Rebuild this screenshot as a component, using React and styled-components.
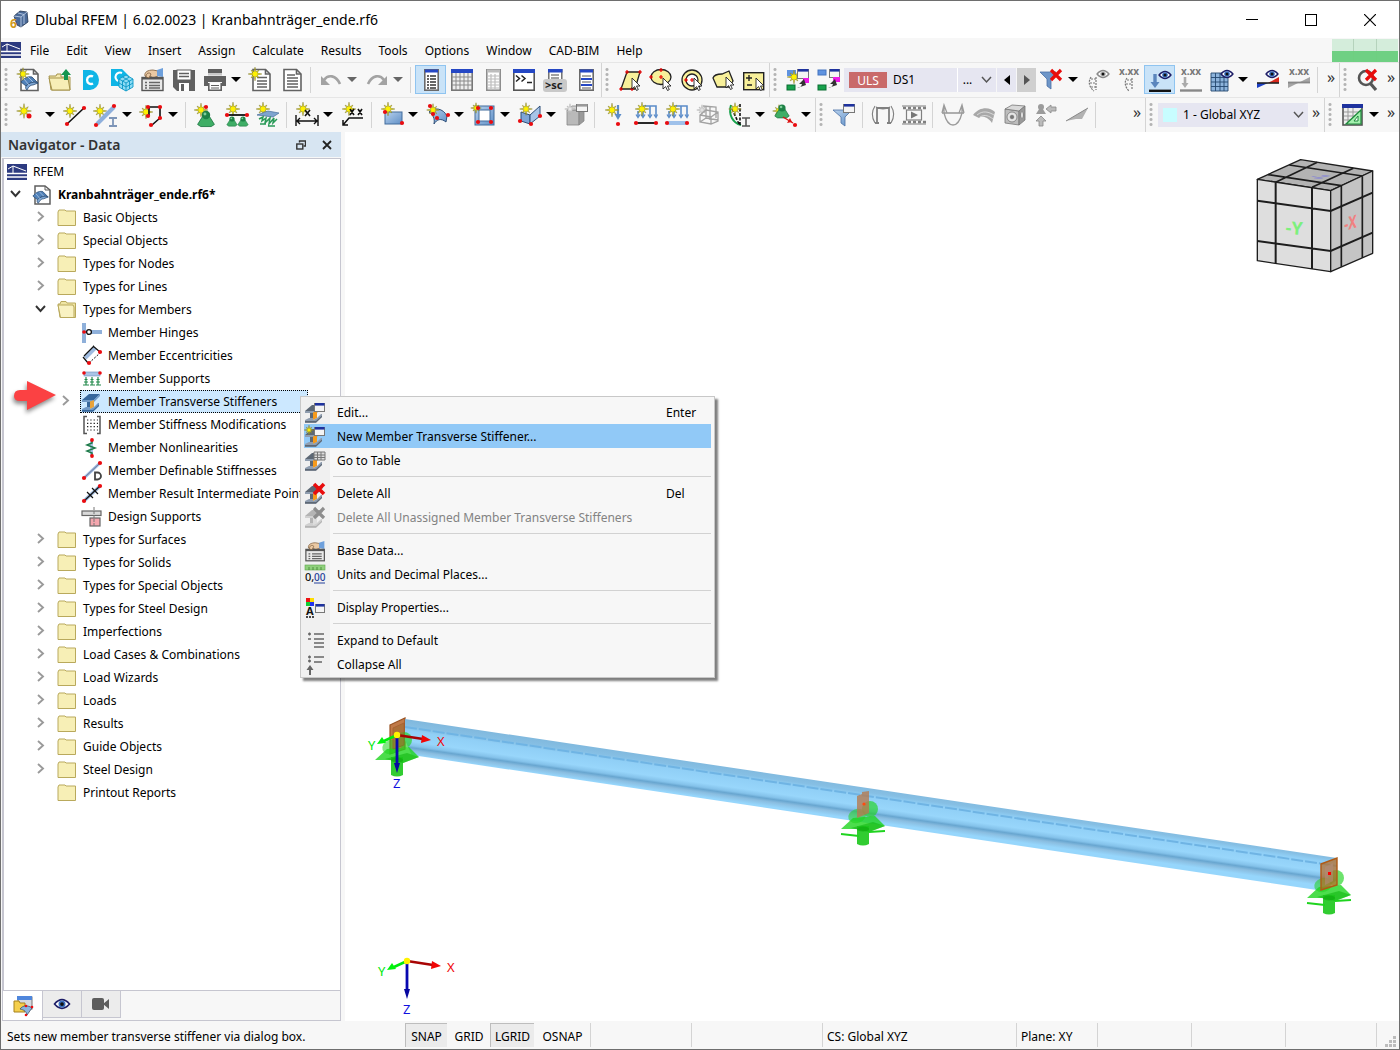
import React from "react";
import styled, { createGlobalStyle, css } from "styled-components";

const UI_FONT = '"Noto Sans", "Open Sans", sans-serif';

const GlobalStyle = createGlobalStyle`
  *, *::before, *::after { box-sizing: border-box; }
  body { margin: 0; background: #fff; }
  button, select { font: inherit; color: inherit; }
`;

/* ---------- drawing helpers ---------- */

function starPoints(cx, cy, r) {
  const pts = [];
  for (let i = 0; i < 16; i += 1) {
    const a = (Math.PI * i) / 8;
    const k = i % 2 ? r * 0.36 : i % 4 === 0 ? r * 1.05 : r * 0.85;
    pts.push(`${(cx + k * Math.sin(a)).toFixed(2)},${(cy - k * Math.cos(a)).toFixed(2)}`);
  }
  return pts.join(" ");
}

const Star = ({ x = 7, y = 7, r = 7, fill = "#fff200", stroke = "#7a7430" }) => (
  <polygon points={starPoints(x, y, r)} fill={fill} stroke={stroke} strokeWidth="0.5" />
);
const Dot = ({ x, y, r = 2.1 }) => <circle cx={x} cy={y} r={r} fill="#ea0c10" />;
const Eye = ({ x = 16, y = 5, c = "#1d1d66", iris = "#3a6fc0" }) => (
  <g transform={`translate(${x} ${y})`}>
    <path d="M-6 0Q0-7 6 0Q0 7-6 0Z" fill="#fff" stroke={c} strokeWidth="1.3" />
    <circle r="2.8" fill={iris} />
    <circle r="1.5" fill="#111" />
  </g>
);
const Cursor = ({ x, y }) => (
  <path transform={`translate(${x} ${y})`} d="M0 0V11L2.6 8.6L4.5 12.5L6.3 11.6L4.5 8H8Z" fill="#fff" stroke="#222" strokeWidth="0.9" />
);
const Cross = ({ x, y, s = 5, c = "#e80c0c", w = 3.2 }) => (
  <path d={`M${x - s} ${y - s}L${x + s} ${y + s}M${x + s} ${y - s}L${x - s} ${y + s}`} stroke={c} strokeWidth={w} fill="none" />
);
const MiniWindow = ({ x, y, w = 10, h = 8, c = "#1e329e" }) => (
  <g>
    <rect x={x + 0.5} y={y + 0.5} width={w} height={h} fill="#f4f4f4" stroke="#777" />
    <rect x={x + 1} y={y} width={w - 0.5} height="2.6" fill={c} />
  </g>
);
const Support = ({ x, y, k = 1 }) => (
  <g transform={`translate(${x} ${y}) scale(${k})`}>
    <path d="M-3 1H3L8 9L5 11H-5L-8 9Z" fill="#3fae66" stroke="#1c7440" strokeWidth="0.8" />
    <circle r="4" fill="#1d8146" />
    <circle cx="-1" cy="-1" r="1.4" fill="#7fcf9a" />
  </g>
);
const LoadArrows = ({ c = "#5b8cc9" }) => (
  <g stroke={c} fill="none" strokeWidth="1.6">
    <path d="M9 3H22V14M16 3V14M9 3V14M4 8V14" />
    <path d="M2 11.5L4 14.5L6 11.5M7 11.5L9 14.5L11 11.5M14 11.5L16 14.5L18 11.5M20 11.5L22 14.5L23.5 11.5" strokeWidth="1.3" />
  </g>
);
const Txt = ({ x, y, s = 7, c = "#222", children, w = 700 }) => (
  <text x={x} y={y} fontFamily={UI_FONT} fontSize={s} fontWeight={w} fill={c}>{children}</text>
);
const Beam3d = ({ web = "#f59a1c", a = "#5d6875", b = "#8f9daf" }) => (
  <g>
    <path d="M0 8L7 2H18L12 8Z" fill={a} />
    <path d="M0 8H12V10H0Z" fill={b} />
    <path d="M5 10H8V16H5Z" fill={a} />
    <path d="M8 9.5L12 8V15L8 17Z" fill={web} />
    <path d="M12 8L18 2V4L12 10Z" fill={b} />
    <path d="M0 17L4 15H8V17L12 15L16 11H17V14L11 19.5H0Z" fill={b} />
    <path d="M0 18H11L17 12.5V14L11 19.8H0Z" fill={a} />
  </g>
);
const Panel = ({ children, c = "#2547c4" }) => (
  <g>
    <rect x="5.8" y="1.8" width="13.4" height="20.4" fill="#fff" stroke="#6a6a6a" strokeWidth="1.6" />
    <rect x="6" y="1.5" width="13" height="3" fill={c} />
    {children}
  </g>
);
const Shell = () => (
  <g>
    <path d="M1 9C4 5 8 3 12 4L18 10C14 8 9 10 6 13Z" fill="#4f80b8" stroke="#29496f" strokeWidth="0.8" />
    <path d="M6 13C5 15 6 16 7 17C9 13 11 12 13 12L18 10C14 8 9 10 6 13Z" fill="#7fa8d6" stroke="#29496f" strokeWidth="0.8" />
    <path d="M4 6L9 12M8 4L13 9" stroke="#dce9f6" strokeWidth="0.6" />
  </g>
);
const Hand = () => (
  <g>
    <path d="M4 8C3 4 7 2 12 2L17 3V8L12 10L9 8L7 10Z" fill="#eac9a4" stroke="#7a5b3a" strokeWidth="0.8" />
    <path d="M16 2L22 0V9L16 8Z" fill="#6ea0dc" />
    <rect x="1" y="9.5" width="21" height="13" fill="#e9e9e9" stroke="#555" strokeWidth="1.4" />
    <path d="M1 10.5H22" stroke="#555" strokeWidth="2" />
    <path d="M4 14.5H6M4 17.5H6M4 20H6M8 14.5H19M8 17.5H19M8 20H19" stroke="#666" strokeWidth="1.4" />
    <path d="M5 9C5 5 8 4 10 6L8 10Z" fill="#eac9a4" stroke="#7a5b3a" strokeWidth="0.8" />
  </g>
);
const Page = ({ children }) => (
  <g fill="none" stroke="#626262" strokeWidth="1.6">
    <path d="M4 1.5H16.5L21 6V22.5H4Z" fill="#fff" />
    <path d="M16.5 1.5V6H21" />
    {children}
  </g>
);
const Cube3 = ({ a = "#b9b9b9", b = "#9a9a9a", c = "#d4d4d4" }) => (
  <g stroke="#858585" strokeWidth="0.8">
    <path d="M3 7H15V22H3Z" fill={a} />
    <path d="M3 7L8 3H20L15 7Z" fill={c} />
    <path d="M15 7L20 3V18L15 22Z" fill={b} />
  </g>
);

const ICONS = {
  /* file toolbar */
  newModel: <><Page /><g transform="translate(3 5)"><Shell /></g><Star x={6} y={6} r={6} /></>,
  open: <><path d="M1 8H8L9 6H13V9H22V22H3Z" fill="#f5eab0" stroke="#a5934a" /><path d="M1 10H20L22 22H4Z" fill="#f7eeb6" stroke="#a5934a" /><path d="M18 1L23 7H20V12H16V7H13Z" fill="#159650" /></>,
  dCenter: <><path d="M4 2H11A9 10 0 0 1 11 22H4Z" fill="#0fb5e6" /><path d="M14 8.5A4 4 0 1 0 14 15.5" fill="none" stroke="#fff" strokeWidth="2.4" /></>,
  cloudCubes: <><path d="M1 1H12L19 8V18H1Z" fill="#0fb5e6" /><path d="M12 5A4 4 0 1 0 8 13" fill="none" stroke="#fff" strokeWidth="2" /><g fill="#8fdcf4" stroke="#0a97c6" strokeWidth="0.9"><path d="M16 7L23 11V19L16 23L9 19V11Z" /><path d="M9 11L16 15L23 11M16 15V23M12.5 9L19.5 13V21M19.5 9L12.5 13V21M9 15L16 19L23 15" fill="none" /></g></>,
  baseData: <Hand />,
  save: <><path d="M1 2H23V23H5L1 19Z" fill="#606060" /><rect x="5" y="2" width="14" height="10" fill="#fff" stroke="#606060" /><path d="M7 5.5H17M7 8.5H17" stroke="#606060" strokeWidth="1.4" /><rect x="7" y="15" width="10" height="8" fill="#fff" /><rect x="9" y="16" width="3" height="7" fill="#606060" /></>,
  print: <><rect x="5" y="1" width="14" height="4" fill="#606060" /><path d="M1 8H23V18H19V14H5V18H1Z" fill="#606060" /><path d="M5.8 15V22.2H18.2V15" fill="#fff" stroke="#606060" strokeWidth="1.6" /><path d="M8 17.5H16M8 20H16" stroke="#606060" /><rect x="5" y="5" width="14" height="2.5" fill="#c8c8c8" /></>,
  newReport: <><Page><path d="M8 9.5H18M8 13H18M8 16H18M8 19H18" strokeWidth="1.4" /></Page><Star x={6} y={6} r={6.5} /></>,
  report: <Page><path d="M7 7H15M7 10H18M7 13H18M7 16H18M7 19H18" strokeWidth="1.4" /></Page>,
  undo: <><path d="M5 12C9 6 17 7 21 16" fill="none" stroke="#a3a3a3" strokeWidth="2.6" /><path d="M2 8V17H11Z" fill="#a3a3a3" /></>,
  redo: <><path d="M19 12C15 6 7 7 3 16" fill="none" stroke="#a3a3a3" strokeWidth="2.6" /><path d="M22 8V17H13Z" fill="#a3a3a3" /></>,
  navPanel: <Panel><path d="M8 8H10M8 11H10M8 14H10M8 17H10M8 20H10M11 8H17M11 11H17M11 14H17M11 17H17M11 20H17" stroke="#333" strokeWidth="1.3" /></Panel>,
  table: <><rect x="1.8" y="1.8" width="20.4" height="20.4" fill="#eee" stroke="#777" strokeWidth="1.6" /><rect x="1" y="1" width="22" height="4" fill="#2547c4" /><path d="M2 9H22M2 13H22M2 17H22M6 5V22M10 5V22M14 5V22M18 5V22" stroke="#8a8a8a" /></>,
  panelOff: <g opacity="0.75"><Panel c="#aaa"><path d="M7 8H18M7 11H18M7 14H18M7 17H18M7 20H18M10 6V22M14 6V22" stroke="#aaa" strokeWidth="1.2" /></Panel></g>,
  console: <><rect x="1.8" y="1.8" width="20.4" height="20.4" fill="#fff" stroke="#555" strokeWidth="1.6" /><rect x="1" y="1" width="22" height="4" fill="#2547c4" /><path d="M4 7.5L7.5 10.5L4 13.5M9.5 7.5L13 10.5L9.5 13.5M15 14.5H20" fill="none" stroke="#222" strokeWidth="1.5" /></>,
  script: <><rect x="5.8" y="1.8" width="13" height="14" fill="#fff" stroke="#666" strokeWidth="1.4" /><rect x="5" y="1" width="14.5" height="3.5" fill="#2547c4" /><path d="M8 7H16M8 10H16" stroke="#444" /><rect x="0" y="11" width="24" height="13" rx="3" fill="#c9c9c9" /><Txt x={2} y={21} s={11}>&gt;sc</Txt></>,
  panelLines: <Panel><path d="M8 8H17M8 14H17M8 20H17" stroke="#555" /><path d="M7 11H18M7 17H18" stroke="#2547c4" strokeWidth="1.8" /></Panel>,
  /* selection toolbar */
  selRect: <><path d="M3 21L9 4H22L17 21Z" fill="#f8f09a" stroke="#222" strokeWidth="1.3" /><g stroke="#e00" strokeWidth="1.2"><path d="M1 21H5M3 19V23M7 4H11M9 2V6M20 4H24M22 2V6M12 21H16M14 19V23" /></g><Cursor x={14} y={10} /></>,
  selEllipse: <><ellipse cx="12" cy="9" rx="10" ry="7.5" fill="#f8f09a" stroke="#222" strokeWidth="1.3" /><g stroke="#e00" strokeWidth="1.2"><path d="M0 9H4M2 7V11M10 9H14M12 7V11M10 2H14M12 0V4" /></g><Cursor x={14} y={10} /></>,
  selRing: <><circle cx="12" cy="12" r="10" fill="#f8f09a" stroke="#222" strokeWidth="1.3" /><circle cx="12" cy="12" r="6" fill="#fff" stroke="#222" strokeWidth="1.3" /><path d="M4 12H8M6 10V14M10 12H14M12 10V14" stroke="#e00" strokeWidth="1.2" /><Cursor x={14} y={10} /></>,
  selPoly: <><path d="M2 10C3 7 6 6 11 6L18 3L22 13L18 19H6Z" fill="#f8f09a" stroke="#222" strokeWidth="1.3" /><Cursor x={15} y={9} /></>,
  selPlusMinus: <><rect x="1.7" y="4.7" width="20" height="17" fill="#f8f09a" stroke="#222" strokeWidth="1.4" /><path d="M4 10H10M7 7V13M5 17H10" stroke="#222" strokeWidth="1.4" /><Cursor x={14} y={10} /></>,
  /* load case toolbar */
  newCase: <><rect x="1" y="2" width="9" height="6" fill="#5f93e0" /><Star x={8} y={9} r={6.5} /><MiniWindow x={11} y={1} w={11} h={9} /><rect x="17" y="10" width="6" height="5" fill="#f018e8" /><rect x="1" y="17" width="8" height="5" fill="#17a24c" stroke="#0b6e32" /><path d="M11 20Q15 20 16 16L13 16L18 11L20 17Z" fill="#333" /></>,
  caseMap: <><rect x="1" y="2" width="8" height="5" fill="#5f93e0" stroke="#4474c0" /><MiniWindow x={12} y={1} w={10} h={8} /><rect x="16" y="9" width="7" height="5" fill="#f018e8" /><rect x="1" y="17" width="8" height="5" fill="#17a24c" stroke="#0b6e32" /><path d="M11 20Q15 20 16 16L13 16L18 11L20 17Z" fill="#333" /></>,
  filterX: <><path d="M0 4H16L11 11V21L7 18V11Z" fill="#6e96c8" stroke="#4a70a4" strokeWidth="0.8" /><Cross x={16} y={7} s={5} /></>,
  eyeMember: <><Eye x={17} y={6} c="#8a8a8a" iris="#bbb" /><path d="M5 9C2 14 3 19 8 23M10 9V22M5 11H10M4 15H10M5 19H10" fill="none" stroke="#777" strokeWidth="1.2" strokeDasharray="2 1" /></>,
  xxMember: <><Txt x={2} y={7} s={10} c="#777">x.xx</Txt><path d="M10 10C7 14 8 19 12 23M15 10V22M10 12H15M9 16H15" fill="none" stroke="#777" strokeWidth="1.2" strokeDasharray="2 1" /></>,
  eyeLoad: <><path d="M7 6V16" stroke="#5b86bd" strokeWidth="3.4" /><path d="M2.5 14H11.5L7 20Z" fill="#5b86bd" /><path d="M1 22.8H23" stroke="#111" strokeWidth="2.4" /><Eye x={17} y={7} /></>,
  xxLoad: <><Txt x={2} y={7} s={10} c="#777">x.xx</Txt><path d="M6 9V17" stroke="#aaa" strokeWidth="2.6" /><path d="M2.5 15H9.5L6 20Z" fill="#aaa" /><path d="M1 22.5H23" stroke="#888" strokeWidth="2.4" /></>,
  eyeMesh: <><path d="M1 5H18V23H1Z" fill="#8db4dc" /><path d="M1 5H18V23H1ZM5.5 5V23M10 5V23M14 5V23M1 9.5H18M1 14H18M1 18.5H18" fill="none" stroke="#24476e" strokeWidth="0.9" /><Eye x={17} y={6} /></>,
  eyeResult: <><path d="M1 15H12L1 20Z" fill="#1b3fc4" /><path d="M12 15H23V9Z" fill="#d8281c" /><path d="M1 15H23" stroke="#222" strokeWidth="1.6" /><Eye x={16} y={6} /></>,
  xxResult: <><Txt x={2} y={7} s={10} c="#777">x.xx</Txt><path d="M1 14.5H12L1 20ZM12 14.5H23V9Z" fill="#a5a5a5" /><path d="M1 14.5H23" stroke="#888" strokeWidth="1.8" /></>,
  zoomX: <><circle cx="10" cy="10" r="7" fill="none" stroke="#555" strokeWidth="2.6" /><path d="M14 15L20 22" stroke="#555" strokeWidth="3.2" /><Cross x={15} y={7} s={5} /></>,
  /* model toolbar */
  newNode: <><Star x={7} y={8} r={7} /><Dot x={12} y={13} r={2.5} /></>,
  newLine: <><Star x={7} y={8} r={6.5} /><path d="M4 21L21 5" stroke="#111" strokeWidth="1.6" /><Dot x={4} y={21} /><Dot x={21} y={5} /></>,
  newMember: <><Star x={6} y={8} r={6.5} /><path d="M3 21L20 4" stroke="#8fb0dc" strokeWidth="4" /><Dot x={2} y={22} /><Dot x={20} y={3} /><path d="M15 15H23M15 23H23M19 15V23" stroke="#7d95b8" strokeWidth="1.8" /></>,
  newPolyline: <><Star x={6} y={9} r={6.5} /><path d="M9 4H20V15L12 22M9 4V12" fill="none" stroke="#111" strokeWidth="1.6" /><Dot x={8} y={4} /><Dot x={20} y={4} /><Dot x={20} y={15} /><Dot x={8} y={13} /><Dot x={11} y={22} /></>,
  newNodalSupport: <><Star x={7} y={7} r={6.5} /><Dot x={12} y={4} /><Support x={12} y={12} k={1.05} /></>,
  newLineSupport: <><Star x={8} y={6} r={6.5} /><path d="M2 12H22" stroke="#111" strokeWidth="1.8" /><Dot x={2} y={12} /><Dot x={22} y={12} /><Support x={7} y={16} k={0.65} /><Support x={18} y={16} k={0.65} /></>,
  newSurfaceSupport: <><Star x={7} y={6} r={6.5} /><path d="M1 12L12 8L23 10L17 14Z" fill="#7fa5cf" stroke="#456d9b" strokeWidth="0.7" /><path d="M3 16L7 14L6 18L10 15L9 20L14 15L13 21L18 15L17 20L21 16M4 21H10M12 23H19" fill="none" stroke="#2a9a58" strokeWidth="1.5" /></>,
  dimension: <><Star x={8} y={6} r={6.5} /><path d="M1 12V23M23 12V23M2 18H22M5 15L2 18L5 21M19 15L22 18L19 21" fill="none" stroke="#111" strokeWidth="1.4" /><path d="M10 7L15 13M15 7L10 13" stroke="#111" strokeWidth="1.6" /></>,
  dimensionXX: <><Star x={8} y={6} r={6.5} /><path d="M2 22L8 15H22M2 17V22H7" fill="none" stroke="#111" strokeWidth="1.5" /><path d="M9 6L13 12M13 6L9 12M17 6L21 12M21 6L17 12" stroke="#111" strokeWidth="1.6" /></>,
  newSurface: <><rect x="5" y="9" width="17" height="12" fill="url(#steel)" stroke="#426c9c" /><Star x={8} y={6} r={6.5} /><Dot x={5} y={9} /><Dot x={22} y={20} /></>,
  newSurfaceCurved: <><path d="M3 9C8 4 17 5 21 13L20 19C15 15 11 16 8 21C9 15 7 12 3 9Z" fill="url(#steel)" stroke="#2f4f78" /><Star x={7} y={7} r={6} /><Dot x={4} y={3} /><Dot x={7} y={11} /><Dot x={11} y={15} /><Dot x={22} y={12} /></>,
  newOpening: <><rect x="3" y="3" width="19" height="19" fill="url(#steel)" stroke="#426c9c" /><rect x="7" y="7" width="11" height="11" fill="#fff" stroke="#426c9c" /><Star x={4} y={5} r={5} /><Dot x={6} y={5} /><Dot x={19} y={5} /><Dot x={6} y={19} /><Dot x={19} y={19} /></>,
  newSolid: <><path d="M3 9L12 12V21L3 18Z" fill="#7fa5d8" stroke="#2f4f78" /><path d="M12 12L22 3V13L12 21Z" fill="#a7c4e8" stroke="#2f4f78" /><Star x={8} y={6} r={6} /><Dot x={2} y={18} /><Dot x={13} y={21} /><Dot x={22} y={13} /></>,
  newBlockOff: <><Cube3 /><MiniWindow x={12} y={1} w={11} h={7} c="#999" /><Star x={6} y={6} r={5} fill="#e6e6e6" stroke="#aaa" /></>,
  nodeLoad: <><path d="M15 2V13" stroke="#5b8cc9" strokeWidth="2.2" /><path d="M11.5 11H18.5L15 17Z" fill="#5b8cc9" /><Star x={9} y={7} r={6.5} /><Dot x={15} y={21} /></>,
  memberLoad: <><LoadArrows /><Star x={8} y={6} r={6.5} /><path d="M2 20H22" stroke="#111" strokeWidth="1.8" /><Dot x={2} y={20} /><Dot x={22} y={20} /></>,
  surfaceLoad: <><LoadArrows /><Star x={8} y={6} r={6.5} /><path d="M2 20H22" stroke="#9fc1ea" strokeWidth="4" /><Dot x={2} y={20} /><Dot x={22} y={20} /></>,
  solidLoadOff: <g fill="none" stroke="#a2a2a2" strokeWidth="1.3"><Star x={6} y={7} r={5} fill="#e0e0e0" stroke="#aaa" /><path d="M4 12L10 7L22 9V18L15 21L4 19ZM4 12L15 14L22 9M15 14V21M10 3V15M10 15L22 17M4 19L10 15" /><path d="M7 3L20 4V15M14 3V17" /></g>,
  imperfection: <><path d="M4 2C1 12 6 20 14 22" fill="none" stroke="#17a24c" strokeWidth="2" /><path d="M13 1V22M5 6L12 21" stroke="#111" strokeWidth="1.6" strokeDasharray="3 1.5" /><Star x={8} y={6} r={6} /><path d="M15 15H23M15 23H23M19 15V23" stroke="#555" strokeWidth="1.6" /></>,
  supportMove: <><Star x={6} y={8} r={6} /><Support x={9} y={5} k={0.9} /><path d="M10 14L20 20" stroke="#d11" strokeWidth="1.4" /><path d="M14 20L19 19L17 15Z" fill="#d11" /><Dot x={22} y={22} /></>,
  filterWin: <><path d="M1 7H20L13 14V23L9 20V14Z" fill="url(#steel)" stroke="#4a70a4" strokeWidth="0.8" /><MiniWindow x={11} y={1} w={11} h={8} /></>,
  frame: <g fill="none" stroke="#808080" strokeWidth="1.8"><path d="M6 20V5H18V20M4 20H8M16 20H20" /><path d="M4 3C0 9 1 15 4 20M20 3C24 9 23 15 20 20M5 4Q12 8 19 4" strokeWidth="1.1" /></g>,
  film: <g stroke="#808080" fill="none"><path d="M0 3H24M0 21H24" strokeWidth="1.2" /><path d="M1 5H24M1 19H24" strokeWidth="2.6" strokeDasharray="3 2" /><rect x="4.5" y="7" width="15" height="10" strokeWidth="1.2" /><path d="M9 8.5V15.5L16 12Z" fill="#777" stroke="none" /></g>,
  moment: <g fill="none" stroke="#9b9b9b" strokeWidth="1.6"><path d="M1 10H23" /><path d="M3 3V10C7 26 17 26 21 10V3M1 10L3 2L6 10M18 10L21 2L23 10" strokeWidth="1.3" /></g>,
  surfRes: <g><path d="M1 12C8 3 18 4 23 9L20 20C15 13 9 13 7 15Z" fill="#a8a8a8" /><path d="M5 12C11 7 17 9 22 12M8 14C13 11 17 13 21 16" fill="none" stroke="#e4e4e4" strokeWidth="0.8" /></g>,
  solidRes: <g stroke="#777" strokeWidth="0.8"><path d="M2 6L16 8V22L2 20Z" fill="#bdbdbd" /><path d="M2 6L9 2L22 3L16 8Z" fill="#d9d9d9" /><path d="M16 8L22 3V17L16 22Z" fill="#999" /><circle cx="9" cy="14" r="5" fill="#e5e5e5" /><circle cx="9" cy="14" r="1.8" fill="#777" /><ellipse cx="19" cy="12" rx="1.6" ry="3.4" fill="#ddd" /></g>,
  reaction: <g fill="#9b9b9b"><path d="M7 3L12 11H2Z" /><circle cx="7" cy="4" r="3" /><path d="M12 6L17 2V4H22V8H17V10Z" fill="#bbb" stroke="#888" strokeWidth="0.8" /><path d="M7 13L12 18H9V23H5V18H2Z" fill="#bbb" stroke="#888" strokeWidth="0.8" /></g>,
  slope: <g><path d="M1 18L23 5L17 16L11 16Z" fill="#b2b2b2" /><path d="M1 18L23 5" stroke="#888" /></g>,
  setsquare: <><rect x="2" y="2" width="19" height="20" fill="#eee" stroke="#555" strokeWidth="1.6" /><rect x="1" y="1" width="21" height="4" fill="#1e329e" /><path d="M3 9H20M3 13H20M3 17H20M7 5V21M12 5V21" stroke="#999" /><path d="M5 21H20V7Z" fill="#a4f0ae" stroke="#1d8a3a" strokeWidth="1.2" /><path d="M13 18H17V13Z" fill="#fff" stroke="#1d8a3a" /></>,
};

const SMALL = {
  logo: <><rect y="2" width="20" height="16" fill="#2c3a80" /><path d="M0 11.5H20M0 15H20" stroke="#fff" strokeWidth="1.4" /><path d="M6 11V4L1 7M6 4L19 9" fill="none" stroke="#fff" strokeWidth="1" /></>,
  model: <><path d="M3 1H13L18 5V19H3Z" fill="#fff" stroke="#5f5f5f" strokeWidth="1.5" /><path d="M13 1V5H18" fill="none" stroke="#5f5f5f" /><g transform="translate(0 3) scale(0.9)"><Shell /></g></>,
  folder: <path d="M1 4L2 2H8L9 3H18.5V17.5H1Z" fill="#f7efb6" stroke="#b9a95c" strokeWidth="1" />,
  folderOpen: <><path d="M1 4H3L4 1.5H9L10 3H18.5V17.5H3Z" fill="#efe5a4" stroke="#b9a95c" /><path d="M1 5H16L17 7V17.5H3.5Z" fill="#f9f2c2" stroke="#b9a95c" /></>,
  hinge: <><path d="M0 0H4V20H0ZM7 7H20V11H7Z" fill="#8fb0da" /><path d="M2 9H7" stroke="#b11" strokeWidth="1.2" /><Dot x={2} y={9} r={1.8} /><circle cx="7" cy="9" r="2.4" fill="#fff" stroke="#111" strokeWidth="1.3" /></>,
  ecc: <><path d="M3 12L13 2" stroke="#9fbbe0" strokeWidth="4" /><path d="M1 11L6 17M11 0L18 6M2 10L12 0" stroke="#111" fill="none" strokeWidth="1.2" /><path d="M7 17L18 7" stroke="#111" strokeDasharray="2 1.5" /><Dot x={7} y={17} /><Dot x={18} y={6} /></>,
  supports: <><rect x="2" y="3" width="16" height="4" fill="#a9c4e6" stroke="#6d8fbd" strokeWidth="0.6" /><path d="M4 8V16M10 8V16M16 8V16M2 13H6M8 13H12M14 13H18M2.5 10.5H5.5M8.5 10.5H11.5M14.5 10.5H17.5M1 16H7M8 16H13M14 16H19" fill="none" stroke="#238a4c" strokeWidth="1.2" /><Dot x={2} y={4} r={1.8} /><Dot x={18} y={4} r={1.8} /></>,
  stiffener: <Beam3d web="#e8a23a" a="#37679c" b="#7199c6" />,
  matrix: <><path d="M5 1.5H2V18.5H5M15 1.5H18V18.5H15" fill="none" stroke="#555" strokeWidth="1.5" /><path d="M5 5H16M5 8.3H16M5 11.6H16M5 15H16" stroke="#222" strokeWidth="1.2" strokeDasharray="1.3 2" /></>,
  spring: <><path d="M8 2H11V18H8Z" fill="#a9c4e6" /><path d="M10 2V5L5 7L13 10L5 13L10 15V18" fill="none" stroke="#1d7a4a" strokeWidth="1.5" /><Dot x={10} y={2} r={1.9} /><Dot x={10} y={18} r={1.9} /></>,
  definable: <><path d="M2 17L18 2" stroke="#9fbbe0" strokeWidth="3" /><path d="M2 17L18 2" stroke="#446" strokeWidth="0.6" /><Dot x={2} y={17} /><Dot x={18} y={2} /><path d="M13 11.5H15.5A3.5 3.5 0 0 1 15.5 18.5H13Z" fill="#fff" stroke="#444" strokeWidth="1.8" /></>,
  intermediate: <><path d="M2 17L18 2" stroke="#9fbbe0" strokeWidth="3.4" /><path d="M5 8L11 14M10 4L16 10M2 17L18 2" stroke="#111" strokeWidth="1.2" /><Dot x={2} y={17} /><Dot x={18} y={2} /></>,
  design: <><rect x="0" y="4" width="19" height="4.5" fill="#d9d9d9" stroke="#666" strokeWidth="1.2" /><rect x="8" y="11" width="10" height="8" fill="#f4a6ae" stroke="#666" strokeWidth="1.2" /><path d="M12 0V19" stroke="#777" strokeDasharray="3 1" /></>,
  menuEdit: <><Beam3d /><MiniWindow x={9} y={0} w={10} h={8} /></>,
  menuNew: <><Beam3d /><MiniWindow x={9} y={0} w={10} h={8} /><Star x={4} y={3} r={4.5} /></>,
  menuTable: <><Beam3d /><rect x="9" y="1" width="11" height="8" fill="#ddd" /><path d="M9 1H20V9H9ZM9 4H20M9 6.5H20M12.5 1V9M16 1V9" fill="none" stroke="#777" /></>,
  menuDelete: <><Beam3d /><Cross x={14} y={5} s={5} w={3.6} /></>,
  menuDeleteOff: <><Beam3d web="#ddd" a="#b4b4b4" b="#d0d0d0" /><Cross x={14} y={5} s={5} c="#8c8c8c" w={3.2} /></>,
  menuBase: <g transform="scale(0.88)"><Hand /></g>,
  menuUnits: <><rect width="20" height="5" y="0" fill="#8fd07c" stroke="#5fa64c" strokeWidth="0.6" /><path d="M4 2V5M8 2V5M12 2V5M16 2V5" stroke="#3f8030" strokeWidth="0.8" /><Txt x={0} y={16} s={11} c="#111" w={500}>0,</Txt><Txt x={9} y={16} s={10} c="#24409a" w={500}>00</Txt><path d="M9 18H20" stroke="#24409a" /></>,
  menuDisplay: <><rect x="1" y="0" width="4" height="4" fill="#e11" /><rect x="5" y="0" width="4" height="4" fill="#fd0" /><rect x="1" y="4" width="4" height="4" fill="#1c3" /><rect x="5" y="4" width="4" height="4" fill="#23e" /><Txt x={1} y={17} s={11} c="#111">A</Txt><path d="M1 19H10" stroke="#111" strokeWidth="1.4" strokeDasharray="2 1" /><MiniWindow x={10} y={6} w={9} h={8} /></>,
  menuExpand: <path d="M3 3H6M4.5 1.5V4.5M3 8H6M9 3H19M9 8H19M9 12H19M9 16H19" stroke="#666" strokeWidth="1.3" />,
  menuCollapse: <><path d="M3 2H6M4.5 .5V3.5M3 6H6M4.5 4.5V7.5M9 2H19M9 7H17" stroke="#666" strokeWidth="1.3" /><path d="M5 10L8.5 15H6V20H4V15H1.5Z" fill="#666" /></>,
  tabData: <><rect x="5" y="1" width="14" height="12" fill="#d5d9e0" stroke="#777" /><rect x="4" y="0" width="15" height="4" fill="#4f86dc" /><path d="M1 5H6L7 7H12V16H1Z" fill="#f5cf4c" stroke="#a5811c" /><path d="M7 13C10 9 15 9 19 12L14 19C13 15 11 14 7 13Z" fill="#8ab4e0" stroke="#345" strokeWidth="0.7" /><Dot x={13} y={10} r={1.3} /><Dot x={13} y={19} r={1.3} /><Dot x={19} y={11} r={1.3} /></>,
  tabEye: <g transform="translate(10 10) scale(1.25)"><Eye x={0} y={0} /></g>,
  tabVideo: <><rect x="1" y="4" width="12" height="12" rx="2" fill="#5d5d5d" /><path d="M12 10L18 5V15Z" fill="#5d5d5d" /></>,
  app: <><path d="M5 6L11 1L18 2L19 12L12 17L8 15Z" fill="#4a6a98" stroke="#22344f" strokeWidth="0.8" /><path d="M5 6L12 7L18 2M12 7V17M9 3L15 4.5V14" fill="none" stroke="#b9cbe4" strokeWidth="0.9" /><Txt x={1} y={18} s={12} c="#d0991c">6</Txt></>,
};

const Svg24 = styled.svg`
  width: 24px;
  height: 24px;
  flex: none;
  display: block;
  overflow: visible;
`;
const Svg20 = styled.svg`
  width: 20px;
  height: 20px;
  flex: none;
  display: block;
  overflow: visible;
`;
const Icon = ({ name }) => <Svg24 viewBox="0 0 24 24" aria-hidden="true">{ICONS[name]}</Svg24>;
const SmallIcon = ({ name }) => <Svg20 viewBox="0 0 20 20" aria-hidden="true">{SMALL[name]}</Svg20>;

/* ---------- window frame ---------- */

const Window = styled.div`
  position: relative;
  display: flex;
  flex-direction: column;
  min-height: 100vh;
  border: 1px solid #6e6e6e;
  background: #f7f7f7;
  color: #000;
  font-family: ${UI_FONT};
  font-size: 12px;
  line-height: 18px;
  overflow: hidden;
`;

const TitleBar = styled.header`
  display: flex;
  align-items: center;
  height: 37px;
  padding-left: 8px;
  background: #fff;
`;
const Title = styled.h1`
  margin: 0;
  padding-left: 6px;
  flex: 1;
  font-size: 14px;
  font-weight: 400;
  line-height: 20px;
`;
const WindowButton = styled.button`
  display: grid;
  place-items: center;
  width: 59px;
  height: 36px;
  padding: 0;
  border: 0;
  background: none;
`;

const MenuBar = styled.nav`
  display: flex;
  align-items: center;
  gap: 1px;
  height: 24px;
  padding-right: 1px;
`;
const MenuEntry = styled.button`
  height: 24px;
  padding: 2px 8px 0;
  border: 0;
  background: none;
  white-space: nowrap;
`;
const Activity = styled.div`
  display: grid;
  grid-template-columns: repeat(3, 1fr);
  gap: 1px;
  width: 66px;
  height: 23px;
  margin-left: auto;
  background: linear-gradient(#b5d3bc 12px, #6fcf80 12px);
`;
const ActivityCell = styled.span`
  background: linear-gradient(#d4eddb 12px, #6fd083 12px);
`;

/* ---------- toolbars ---------- */

const ToolbarRow = styled.div`
  display: flex;
  height: 35px;
  border-top: 1px solid #e6e6e6;
`;
const Group = styled.div`
  display: flex;
  align-items: center;
  flex: ${(p) => (p.$grow ? "1 1 auto" : "none")};
  min-width: 0;
  padding-bottom: 1px;
  border-right: ${(p) => (p.$last ? "0" : "1px solid #d4d4d4")};
`;
const Handle = styled.span`
  flex: none;
  width: 12px;
  height: 26px;
  background: radial-gradient(circle, #b4b4b4 1px, transparent 2px) 3px 0 / 4px 5px repeat-y;
`;
const ToolButton = styled.button`
  display: grid;
  place-items: center;
  flex: none;
  width: 31px;
  height: 29px;
  padding: 0;
  border: 1px solid ${(p) => (p.$on ? "#8fc4f0" : "transparent")};
  background: ${(p) => (p.$on ? "#c9e3f8" : "none")};
`;
const DropButton = styled.button`
  flex: none;
  width: 15px;
  height: 29px;
  padding: 0;
  border: 0;
  background: none;
  &::after {
    content: "";
    display: block;
    width: 9px;
    margin-left: 1px;
    border: 5px solid transparent;
    border-top-color: ${(p) => (p.$dim ? "#666" : "#000")};
    border-bottom: 0;
  }
`;
const Divider = styled.span`
  flex: none;
  width: 1px;
  height: 26px;
  margin: 0 4px 0 3px;
  background: #d4d4d4;
`;
const MoreButton = styled.button`
  flex: none;
  width: 16px;
  height: 29px;
  margin-left: auto;
  padding: 0 0 5px;
  border: 0;
  background: none;
  font-size: 16px;
  color: #333;
`;
const Combo = styled.div`
  display: flex;
  align-items: center;
  flex: none;
  width: ${(p) => p.$width};
  height: 24px;
  padding-left: 5px;
  background: #e6e6f1;
`;
const Badge = styled.span`
  width: 38px;
  height: 16px;
  background: #c96a6a;
  color: #fff;
  line-height: 17px;
  text-align: center;
`;
const Swatch = styled.span`
  width: 14px;
  height: 14px;
  background: #c8fdff;
`;
const Select = styled.select`
  flex: 1;
  min-width: 0;
  height: 24px;
  padding: 0 6px;
  border: 0;
  border-right: ${(p) => (p.$split ? "1px solid #fff" : "0")};
  border-radius: 0;
  background: none;
  appearance: none;
  line-height: 24px;
`;
const ComboButton = styled.button`
  display: grid;
  place-items: center;
  width: 19px;
  height: 24px;
  padding: 0;
  border: 0;
  background: none;
`;
const StepButton = styled.button`
  display: grid;
  place-items: center;
  flex: none;
  width: 19px;
  height: 24px;
  margin-left: 1px;
  padding: 0;
  border: 0;
  background: ${(p) => (p.$grey ? "#cfcfcf" : "#e6e6f1")};
`;

const Chevron = ({ d = "M1 3L5.5 8L10 3", c = "#555", w = 1.5 }) => (
  <svg width="11" height="11" viewBox="0 0 11 11" aria-hidden="true">
    <path d={d} fill="none" stroke={c} strokeWidth={w} />
  </svg>
);

/* "|" divider, "v" drop-down arrow, "-" greyed drop-down arrow, "*" prefix pressed */
const Tools = ({ items }) =>
  items.split(" ").map((it, i) => {
    if (it === "|") return <Divider key={i} />;
    if (it === "v" || it === "-") return <DropButton key={i} $dim={it === "-"} aria-label="More options" />;
    const on = it[0] === "*";
    const name = on ? it.slice(1) : it;
    return (
      <ToolButton key={i} $on={on} aria-label={name} aria-pressed={on || undefined}>
        <Icon name={name} />
      </ToolButton>
    );
  });

/* ---------- navigator ---------- */

const Workspace = styled.div`
  display: flex;
  flex: 1;
  min-height: 0;
`;
const Navigator = styled.aside`
  display: flex;
  flex-direction: column;
  flex: none;
  width: 340px;
  margin-right: 4px;
`;
const NavHeader = styled.div`
  display: flex;
  align-items: center;
  height: 25px;
  padding: 0 1px 0 7px;
  background: #d7e5f2;
`;
const NavTitle = styled.h2`
  flex: 1;
  margin: 0;
  font-size: 14px;
  font-weight: 600;
  color: #333;
`;
const HeaderButton = styled.button`
  display: grid;
  place-items: center;
  width: 26px;
  height: 22px;
  padding: 0;
  border: 0;
  background: none;
`;
const TreePanel = styled.div`
  flex: 1;
  margin: 1px 0 0 1px;
  padding-top: 1px;
  border: 1px solid #c6c6d0;
  border-width: 1px 1px 1px 2px;
  background: #fff;
  overflow: hidden;
`;
const Tree = styled.ul`
  margin: 0;
  padding: 0;
  list-style: none;
`;
const TreeRow = styled.li`
  display: flex;
  align-items: center;
  height: 23px;
  padding-left: ${(p) => p.$level * 25}px;
`;
const Toggle = styled.button`
  display: grid;
  place-items: center;
  flex: none;
  width: 22px;
  height: 22px;
  margin-right: 4px;
  padding: 0 0 2px;
  border: 0;
  background: none;
  visibility: ${(p) => (p.$none ? "hidden" : "visible")};
`;
const TreeLabel = styled.span`
  display: flex;
  align-items: center;
  gap: 6px;
  height: 23px;
  padding: 0 30px 0 1px;
  border: 1px dotted transparent;
  white-space: nowrap;
  font-weight: ${(p) => (p.$bold ? 700 : 400)};
  ${(p) => p.$selected && css`
    border-color: #000;
    background: #cce8ff;
  `}
`;
const TabStrip = styled.div`
  display: flex;
  height: 30px;
  margin-left: 1px;
  border: 1px solid #c6c6d0;
  border-top: 0;
`;
const Tab = styled.button`
  display: grid;
  place-items: center;
  width: ${(p) => (p.$active ? "40px" : "39px")};
  height: ${(p) => (p.$active ? "29px" : "27px")};
  padding: 0;
  border: 0;
  border-right: 1px solid #c6c6d0;
  border-bottom: ${(p) => (p.$active ? "0" : "1px solid #c6c6d0")};
  background: ${(p) => (p.$active ? "#fff" : "#ececec")};
`;

const TREE = [
  ["Basic Objects", 1, "folder", "closed"],
  ["Special Objects", 1, "folder", "closed"],
  ["Types for Nodes", 1, "folder", "closed"],
  ["Types for Lines", 1, "folder", "closed"],
  ["Types for Members", 1, "folderOpen", "open"],
  ["Member Hinges", 2, "hinge"],
  ["Member Eccentricities", 2, "ecc"],
  ["Member Supports", 2, "supports"],
  ["Member Transverse Stiffeners", 2, "stiffener", "closed"],
  ["Member Stiffness Modifications", 2, "matrix"],
  ["Member Nonlinearities", 2, "spring"],
  ["Member Definable Stiffnesses", 2, "definable"],
  ["Member Result Intermediate Points", 2, "intermediate"],
  ["Design Supports", 2, "design"],
  ["Types for Surfaces", 1, "folder", "closed"],
  ["Types for Solids", 1, "folder", "closed"],
  ["Types for Special Objects", 1, "folder", "closed"],
  ["Types for Steel Design", 1, "folder", "closed"],
  ["Imperfections", 1, "folder", "closed"],
  ["Load Cases & Combinations", 1, "folder", "closed"],
  ["Load Wizards", 1, "folder", "closed"],
  ["Loads", 1, "folder", "closed"],
  ["Results", 1, "folder", "closed"],
  ["Guide Objects", 1, "folder", "closed"],
  ["Steel Design", 1, "folder", "closed"],
  ["Printout Reports", 1, "folder"],
];

const RootRow = styled.li`
  display: flex;
  align-items: center;
  gap: 6px;
  height: 23px;
  padding-left: 3px;
`;

/* ---------- model view ---------- */

const Viewport = styled.main`
  position: relative;
  flex: 1;
  min-width: 0;
  background: #fff;
`;
const Scene = styled.svg`
  display: block;
  width: 100%;
  height: 100%;
`;
const ViewCube = styled.svg`
  position: absolute;
  top: 13px;
  right: 9px;
  width: 150px;
  height: 140px;
`;

const band = (a, b) => `405,${719 + a} 1337,${858 + a} 1337,${858 + b} 405,${719 + b}`;

const SceneSupport = ({ x, y, wings }) => (
  <g transform={`translate(${x} ${y})`} fill="#1fd41f">
    <path d="M-22 25L-10 14L12 12L22 22L6 28L-6 25Z" opacity="0.8" />
    <path d="M-12 24L10 18L22 22L6 28Z" fill="#12b812" opacity="0.6" />
    <ellipse cx="-6" cy="12" rx="9" ry="7" opacity="0.55" transform="rotate(-20 -6 12)" />
    <ellipse cx="7" cy="5" rx="8" ry="8" opacity="0.65" />
    <path d="M-6 22H6V40Q0 43-6 40Z" fill="#1bc71b" opacity="0.9" />
    <ellipse cx="0" cy="25" rx="6" ry="2.5" fill="#0fa50f" opacity="0.6" />
    {wings && <path d="M-22 30L-4 32M6 28L22 27" stroke="#1fd41f" strokeWidth="1.8" />}
  </g>
);

const Axes = ({ x, y }) => (
  <g fontFamily={UI_FONT} fontSize="13">
    <path d={`M${x} ${y}L${x - 13} ${y + 6}`} stroke="#00e80c" strokeWidth="2.6" />
    <path d={`M${x - 20} ${y + 9}L${x - 15} ${y + 2}L${x - 11} ${y + 8}Z`} fill="#00f50c" />
    <path d={`M${x} ${y}L${x + 26} ${y + 4}`} stroke="#a80404" strokeWidth="2.4" />
    <path d={`M${x + 34} ${y + 5}L${x + 25} ${y + 0}L${x + 24} ${y + 8}Z`} fill="#f00606" />
    <path d={`M${x} ${y}V${y + 29}`} stroke="#0808b0" strokeWidth="2.8" />
    <path d={`M${x - 3} ${y + 28}H${x + 3}L${x} ${y + 38}Z`} fill="#0606a0" />
    <circle cx={x} cy={y} r="3.2" fill="#fff200" />
    <text x={x - 29} y={y + 15} fill="#00e80c">Y</text>
    <text x={x + 40} y={y + 11} fill="#f00606">X</text>
    <text x={x - 4} y={y + 53} fill="#1010e0">Z</text>
  </g>
);

function ModelScene() {
  return (
    <Scene viewBox="345 132 1054 889" preserveAspectRatio="xMinYMin meet" role="img" aria-label="Crane runway beam model">
      <path d="M390 725L405 718V749L390 754Z" fill="#c07a48" stroke="#9a5424" strokeWidth="1.2" />
      <clipPath id="beamEnds"><path d="M405 718L1337 857V880L1320 893L412 756L405 740Z" /></clipPath>
      <linearGradient id="beamSkin" gradientUnits="userSpaceOnUse" x1="405" y1="719" x2="400" y2="754">
        <stop offset="0" stopColor="#80b8dd" />
        <stop offset="0.2" stopColor="#86bfe4" />
        <stop offset="0.32" stopColor="#90cff6" />
        <stop offset="0.6" stopColor="#98d6fb" />
        <stop offset="0.72" stopColor="#84c2ea" />
        <stop offset="0.78" stopColor="#68a6d0" />
        <stop offset="0.86" stopColor="#8abde0" />
        <stop offset="1" stopColor="#96d6fc" />
      </linearGradient>
      <g clipPath="url(#beamEnds)">
        <polygon points={band(0, 35)} fill="url(#beamSkin)" />
        <path d="M405 727L1337 866" stroke="#6fb4e4" strokeWidth="2" strokeDasharray="12 2" />
      </g>
      <SceneSupport x={397} y={735} />
      <path d="M393 728L404 723V745L393 749Z" fill="#a06a30" opacity="0.6" stroke="#9a5424" />
      <SceneSupport x={863} y={804} wings />
      <path d="M857 796L862 794V792L869 791V813L857 818Z" fill="#b57b50" opacity="0.8" />
      <circle cx="864" cy="804" r="1.6" fill="#ff4a10" />
      <SceneSupport x={1329} y={873} wings />
      <path d="M1321 864L1337 858V885L1321 890Z" fill="#b8681e" fillOpacity="0.7" stroke="#b05a14" strokeWidth="1.4" />
      <path d="M1325 867L1333 863V881L1325 885Z" fill="#b08a78" opacity="0.6" />
      <rect x="1328" y="872" width="3" height="3" fill="#f00" />
      <Axes x={397} y={735} />
      <Axes x={407} y={961} />
    </Scene>
  );
}

function Cube() {
  return (
    <ViewCube viewBox="0 0 450 420" role="img" aria-label="View cube">
      <g stroke="#1d1d1d" strokeWidth="4" strokeLinejoin="round">
        <path d="M52 103L182 44L398 78L272 137Z" fill="#b3b3b3" />
        <path d="M52 103L272 137V380L52 347Z" fill="#dedede" />
        <path d="M272 137L398 78V325L272 380Z" fill="#c4c4c4" />
      </g>
      <g fill="none" stroke="#1d1d1d" strokeWidth="6">
        <path d="M107 112V355M216 127V372M52 167L272 198L398 143M52 288L272 318L398 263" />
        <path d="M304 123V365M367 94V338" strokeWidth="5" />
        <path d="M107 112L232 52M216 127L340 70M84 89L304 122M148 60L367 93" strokeWidth="5" />
      </g>
      <text x="137" y="268" fontFamily={UI_FONT} fontSize="54" fontWeight="700" fill="#7df07d" transform="rotate(4 160 250)">-Y</text>
      <text x="0" y="0" fontFamily={UI_FONT} fontSize="54" fontWeight="700" fill="#f08080" transform="matrix(.7 -.2 0 1 313 258)">-X</text>
      <text x="0" y="0" fontFamily={UI_FONT} fontSize="46" fontWeight="700" fill="#8a8ad0" transform="matrix(1 .1 -.8 .3 205 98)">-Z</text>
    </ViewCube>
  );
}

/* ---------- context menu ---------- */

const ContextMenu = styled.div`
  position: absolute;
  left: 299px;
  top: 395px;
  width: 415px;
  padding: 3px 3px 1px;
  border: 1px solid #c8c8c8;
  background: linear-gradient(90deg, #f0f0f0 29px, #f7f7f7 29px);
  box-shadow: 3px 3px 2px rgba(0, 0, 0, 0.5);
`;
const MenuItem = styled.button`
  display: grid;
  grid-template-columns: 20px 1fr 45px;
  column-gap: 12px;
  align-items: center;
  width: 100%;
  height: 24px;
  padding: 2px 0 0 1px;
  border: 0;
  background: ${(p) => (p.$active ? "#91c9f7" : "none")};
  color: ${(p) => (p.disabled ? "#838383" : "#000")};
  text-align: left;
  white-space: nowrap;
`;
const MenuRule = styled.hr`
  height: 1px;
  margin: 4px 0 4px 29px;
  border: 0;
  background: #d2d2d2;
`;

const MENU = [
  ["menuEdit", "Edit...", "Enter"],
  ["menuNew", "New Member Transverse Stiffener...", "", "active"],
  ["menuTable", "Go to Table"],
  null,
  ["menuDelete", "Delete All", "Del"],
  ["menuDeleteOff", "Delete All Unassigned Member Transverse Stiffeners", "", "disabled"],
  null,
  ["menuBase", "Base Data..."],
  ["menuUnits", "Units and Decimal Places..."],
  null,
  ["menuDisplay", "Display Properties..."],
  null,
  ["menuExpand", "Expand to Default"],
  ["menuCollapse", "Collapse All"],
];

const Pointer = styled.svg`
  position: absolute;
  left: 11px;
  top: 376px;
  width: 48px;
  height: 42px;
  filter: drop-shadow(-1px 3px 2px rgba(0, 0, 0, 0.45));
  pointer-events: none;
`;

/* ---------- status bar ---------- */

const StatusBar = styled.footer`
  display: flex;
  align-items: stretch;
  height: 28px;
  padding: 2px 3px 0 0;
`;
const Message = styled.div`
  flex: none;
  width: 404px;
  padding: 5px 6px 0;
`;
const SnapButton = styled.button`
  flex: none;
  width: ${(p) => p.$width};
  height: 24px;
  padding: 3px 0 0;
  border: solid ${(p) => (p.$on ? "#bdbdbd" : "transparent")};
  border-width: 1px 0 0 1px;
  background: ${(p) => (p.$on ? "#ebebeb" : "none")};
`;
const StatusCell = styled.div`
  flex: ${(p) => (p.$width ? "none" : "1")};
  width: ${(p) => p.$width || "auto"};
  height: 24px;
  padding: 5px 4px 0;
  border-left: 1px solid #d4d4d4;
`;
const Grip = styled.svg`
  align-self: flex-end;
  width: 11px;
  height: 13px;
`;
const Defs = styled.svg`
  position: absolute;
`;

export default function App() {
  return (
    <Window>
      <GlobalStyle />
      <TitleBar>
        <SmallIcon name="app" />
        <Title>Dlubal RFEM | 6.02.0023 | Kranbahnträger_ende.rf6</Title>
        <WindowButton aria-label="Minimize"><svg width="12" height="12"><path d="M0 5.5H12" stroke="#000" /></svg></WindowButton>
        <WindowButton aria-label="Maximize"><svg width="12" height="12"><rect x=".5" y=".5" width="11" height="11" fill="none" stroke="#000" /></svg></WindowButton>
        <WindowButton aria-label="Close"><svg width="12" height="12"><path d="M0 0L12 12M12 0L0 12" stroke="#000" strokeWidth="1.2" /></svg></WindowButton>
      </TitleBar>

      <MenuBar>
        <SmallIcon name="logo" />
        {["File", "Edit", "View", "Insert", "Assign", "Calculate", "Results", "Tools", "Options", "Window", "CAD-BIM", "Help"].map((m) => (
          <MenuEntry key={m}>{m}</MenuEntry>
        ))}
        <Activity><ActivityCell /><ActivityCell /><ActivityCell /></Activity>
      </MenuBar>

      <ToolbarRow>
        <Group>
          <Handle />
          <Tools items="newModel open dCenter cloudCubes baseData save print v newReport report | undo - redo - | *navPanel table panelOff console script panelLines" />
        </Group>
        <Group>
          <Handle />
          <Tools items="selRect selEllipse selRing selPoly selPlusMinus" />
        </Group>
        <Group $grow>
          <Handle />
          <Tools items="newCase caseMap" />
          <Combo $width="152px">
            <Badge>ULS</Badge>
            <Select $split aria-label="Design situation"><option>DS1</option></Select>
            <ComboButton aria-label="Select">...</ComboButton>
            <ComboButton aria-label="Open list"><Chevron /></ComboButton>
          </Combo>
          <StepButton aria-label="Previous"><svg width="6" height="10"><path d="M6 0V10L0 5Z" /></svg></StepButton>
          <StepButton $grey aria-label="Next"><svg width="6" height="10"><path d="M0 0V10L6 5Z" fill="#555" /></svg></StepButton>
          <Tools items="filterX v eyeMember xxMember *eyeLoad xxLoad eyeMesh v eyeResult xxResult |" />
          <MoreButton aria-label="More tools">»</MoreButton>
        </Group>
        <Group $last>
          <Handle />
          <Tools items="zoomX" />
          <MoreButton aria-label="More tools">»</MoreButton>
        </Group>
      </ToolbarRow>

      <ToolbarRow>
        <Group>
          <Handle />
          <Tools items="newNode v newLine newMember v newPolyline v | newNodalSupport newLineSupport newSurfaceSupport | dimension v dimensionXX | newSurface v newSurfaceCurved v newOpening v newSolid v newBlockOff | nodeLoad memberLoad surfaceLoad solidLoadOff imperfection v supportMove v" />
        </Group>
        <Group $grow>
          <Handle />
          <Tools items="filterWin | frame film | moment surfRes solidRes reaction slope |" />
          <MoreButton aria-label="More tools">»</MoreButton>
        </Group>
        <Group>
          <Handle />
          <Combo $width="150px">
            <Swatch />
            <Select aria-label="Coordinate system"><option>1 - Global XYZ</option></Select>
            <ComboButton aria-label="Open list"><Chevron /></ComboButton>
          </Combo>
          <MoreButton aria-label="More tools">»</MoreButton>
        </Group>
        <Group $last>
          <Handle />
          <Tools items="setsquare v" />
          <MoreButton aria-label="More tools">»</MoreButton>
        </Group>
      </ToolbarRow>

      <Workspace>
        <Navigator>
          <NavHeader>
            <NavTitle>Navigator - Data</NavTitle>
            <HeaderButton aria-label="Float"><svg width="10" height="10"><path d="M3.5 2.5V1H9.5V6H7.5" fill="none" stroke="#333" strokeWidth="1.4" /><rect x=".8" y="4" width="6" height="5" fill="none" stroke="#333" strokeWidth="1.4" /></svg></HeaderButton>
            <HeaderButton aria-label="Close"><svg width="10" height="10"><path d="M1 1L9 9M9 1L1 9" stroke="#222" strokeWidth="1.8" /></svg></HeaderButton>
          </NavHeader>
          <TreePanel>
            <Tree role="tree">
              <RootRow role="treeitem"><SmallIcon name="logo" />RFEM</RootRow>
              <TreeRow $level={0} role="treeitem" aria-expanded="true">
                <Toggle aria-label="Collapse"><Chevron c="#333" w={1.9} /></Toggle>
                <TreeLabel $bold><SmallIcon name="model" />Kranbahnträger_ende.rf6*</TreeLabel>
              </TreeRow>
              {TREE.map(([text, level, icon, state]) => (
                <TreeRow key={text} $level={level} role="treeitem" aria-expanded={state ? state === "open" : undefined}>
                  <Toggle $none={!state} aria-label={state === "open" ? "Collapse" : "Expand"}>
                    {state === "open" ? <Chevron c="#333" w={1.9} /> : <Chevron d="M3 1L8 5.5L3 10" c="#9a9a9a" w={1.9} />}
                  </Toggle>
                  <TreeLabel $selected={icon === "stiffener"}><SmallIcon name={icon} />{text}</TreeLabel>
                </TreeRow>
              ))}
            </Tree>
          </TreePanel>
          <TabStrip>
            <Tab $active aria-label="Data"><SmallIcon name="tabData" /></Tab>
            <Tab aria-label="Display"><SmallIcon name="tabEye" /></Tab>
            <Tab aria-label="Views"><SmallIcon name="tabVideo" /></Tab>
          </TabStrip>
        </Navigator>
        <Viewport>
          <ModelScene />
          <Cube />
        </Viewport>
      </Workspace>

      <StatusBar>
        <Message>Sets new member transverse stiffener via dialog box.</Message>
        <SnapButton $on $width="42px">SNAP</SnapButton>
        <SnapButton $width="43px">GRID</SnapButton>
        <SnapButton $on $width="44px">LGRID</SnapButton>
        <SnapButton $width="56px">OSNAP</SnapButton>
        <StatusCell $width="101px" />
        <StatusCell $width="131px" />
        <StatusCell $width="194px">CS: Global XYZ</StatusCell>
        <StatusCell $width="81px">Plane: XY</StatusCell>
        <StatusCell $width="94px" />
        <StatusCell $width="94px" />
        <StatusCell />
        <StatusCell $width="6px" />
        <Grip viewBox="0 0 11 13" aria-hidden="true">
          <path d="M8 0H11V3H8ZM8 4H11V7H8ZM4 4H7V7H4ZM8 8H11V11H8ZM4 8H7V11H4ZM0 8H3V11H0Z" fill="#bcbcbc" />
        </Grip>
      </StatusBar>

      <Pointer viewBox="0 0 48 42" aria-hidden="true">
        <path d="M2 19Q2 13 8 13H15V4L44 18L15 33V24H8Q2 24 2 19Z" fill="#fb4143" />
      </Pointer>

      <ContextMenu role="menu">
        {MENU.map((m, i) =>
          m ? (
            <MenuItem key={i} role="menuitem" $active={m[3] === "active"} disabled={m[3] === "disabled"}>
              <SmallIcon name={m[0]} />
              <span>{m[1]}</span>
              <span>{m[2]}</span>
            </MenuItem>
          ) : (
            <MenuRule key={i} />
          )
        )}
      </ContextMenu>

      <Defs width="0" height="0" aria-hidden="true">
        <defs>
          <linearGradient id="steel" x1="0" y1="0" x2="1" y2="1">
            <stop offset="0" stopColor="#b9d2ee" />
            <stop offset="1" stopColor="#5f8fc6" />
          </linearGradient>
        </defs>
      </Defs>
    </Window>
  );
}
